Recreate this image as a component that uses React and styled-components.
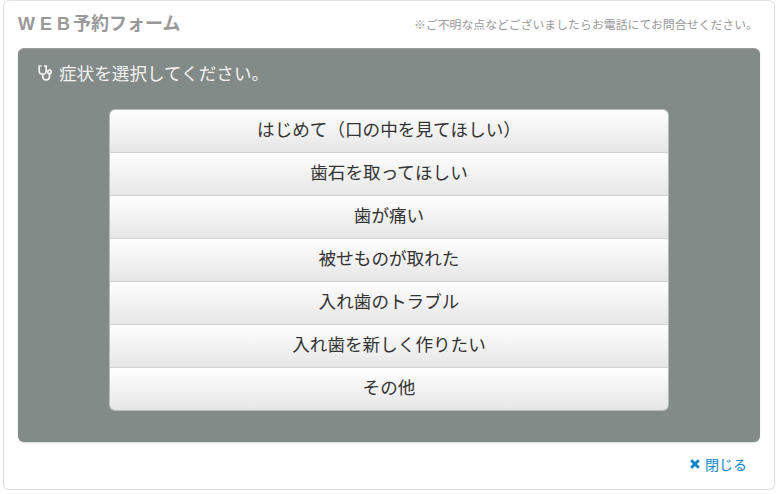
import React from "react";
import styled, { createGlobalStyle } from "styled-components";

const GlobalStyle = createGlobalStyle`
  html, body {
    margin: 0;
    padding: 0;
    background: #fff;
    font-family: "Noto Sans CJK JP", "Noto Sans", sans-serif;
  }
`;

const Modal = styled.div`
  box-sizing: border-box;
  width: 772px;
  height: 490px;
  margin-left: 3px;
  padding: 0 14px;
  background: #fff;
  border: 1px solid #dedede;
  border-top-color: #e4e4e4;
  border-radius: 6px;
  display: flex;
  flex-direction: column;
`;

const Header = styled.header`
  height: 47px;
  display: flex;
  align-items: center;
  justify-content: space-between;
  padding-right: 2px;
`;

const Title = styled.h1`
  margin: 0;
  padding-bottom: 4px;
  font-size: 18px;
  font-weight: 700;
  color: #999;
  line-height: 1;
`;

const TitleLatin = styled.span`
  font-family: "Liberation Sans", sans-serif;
  letter-spacing: 5px;
  margin-right: -2px;
`;

const Notice = styled.p`
  margin: 0;
  padding-bottom: 2px;
  font-size: 11.9px;
  color: #999;
`;

const Panel = styled.section`
  box-sizing: border-box;
  height: 394px;
  background: #838b88;
  border-top: 1px solid #9a9f9e;
  border-radius: 6px;
  box-shadow: 0 1px 2px rgba(0, 0, 0, 0.15);
  padding: 0 92px;
  display: flex;
  flex-direction: column;
`;

const PanelTitle = styled.h2`
  height: 61px;
  margin: 0 0 0 -73px;
  display: flex;
  align-items: center;
  gap: 6px;
  padding-bottom: 14px;
  box-sizing: border-box;
  font-size: 17.6px;
  font-weight: 400;
  color: #f2f2f2;

  svg {
    margin-left: 1px;
  }
`;

const Choices = styled.ul`
  margin: 0;
  padding: 0;
  list-style: none;
  border-radius: 5px;
  overflow: hidden;
  box-shadow: 0 0 0 1px #b9bcbb;
`;

const Choice = styled.li`
  box-sizing: border-box;
  height: 43px;
  padding-bottom: 5px;
  display: flex;
  align-items: center;
  justify-content: center;
  font-size: 17.6px;
  color: #333;
  background: linear-gradient(#fefefe, #e6e6e6);
  border-bottom: 1px solid #d2d2d2;

  &:last-child {
    border-bottom: none;
    height: 42px;
  }
`;

const Footer = styled.footer`
  flex: 1;
  display: flex;
  align-items: center;
  justify-content: flex-end;
  padding: 0 13px 4px 0;
`;

const CloseLink = styled.a`
  display: flex;
  align-items: center;
  gap: 5px;
  font-size: 14px;
  color: #0d86c6;
`;

const StethoscopeIcon = () => (
  <svg width="15" height="16" viewBox="0 0 15 16" fill="none" stroke="#f4f4f4" strokeWidth="1.7" strokeLinecap="round">
    <path d="M2.8 1H1.2v4.5c0 2.3 1.4 3.8 3.5 3.8s3.5-1.5 3.5-3.8V1H6.6" />
    <path d="M4.7 9.3v1.9c0 2.2 1.4 3.6 3.4 3.6s3.4-1.4 3.4-3.6V8.8" />
    <circle cx="11.5" cy="6.9" r="1.7" />
  </svg>
);

const CloseIcon = () => (
  <svg width="10" height="10" viewBox="0 0 10 10" fill="none" stroke="#0d86c6" strokeWidth="3">
    <path d="M1.2 1.2l7.6 7.6M8.8 1.2L1.2 8.8" />
  </svg>
);

const choices = [
  "はじめて（口の中を見てほしい）",
  "歯石を取ってほしい",
  "歯が痛い",
  "被せものが取れた",
  "入れ歯のトラブル",
  "入れ歯を新しく作りたい",
  "その他",
];

const App = () => (
  <>
    <GlobalStyle />
    <Modal>
      <Header>
        <Title>
          <TitleLatin>WEB</TitleLatin>予約フォーム
        </Title>
        <Notice>※ご不明な点などございましたらお電話にてお問合せください。</Notice>
      </Header>
      <Panel>
        <PanelTitle>
          <StethoscopeIcon />
          症状を選択してください。
        </PanelTitle>
        <Choices>
          {choices.map((choice) => (
            <Choice key={choice}>{choice}</Choice>
          ))}
        </Choices>
      </Panel>
      <Footer>
        <CloseLink>
          <CloseIcon />
          閉じる
        </CloseLink>
      </Footer>
    </Modal>
  </>
);

export default App;
